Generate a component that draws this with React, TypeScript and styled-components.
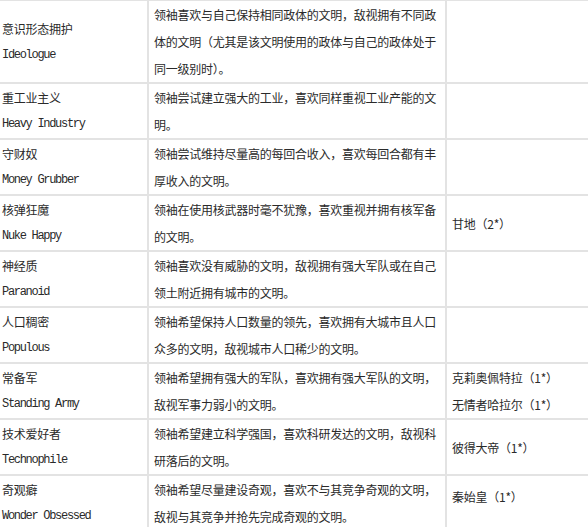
import styled, { createGlobalStyle } from "styled-components";

const GlobalStyle = createGlobalStyle`
  html, body {
    margin: 0;
    padding: 0;
    background: #ffffff;
    overflow: hidden;
  }
`;

const Page = styled.div`
  width: 588px;
  height: 527px;
  overflow: hidden;
  background: #ffffff;
`;

const Table = styled.table`
  border-collapse: collapse;
  margin-left: -5px;
  margin-top: -1px;
  table-layout: fixed;
  width: 640px;
  color: #2a2a2a;
  font-family: "Noto Sans CJK SC", "Noto Sans", sans-serif;
  font-size: 12px;
  letter-spacing: -0.25px;
`;

const Col = styled.col<{ $width: number }>`
  width: ${({ $width }) => `${$width}px`};
`;

const Cell = styled.td<{ $lift?: number }>`
  box-sizing: border-box;
  border: 2px solid #e3e3e3;
  padding: 0 4px 0 5px;
  line-height: 27px;
  vertical-align: middle;
  white-space: nowrap;
  overflow: hidden;
  padding-bottom: ${({ $lift }) => ($lift ? `${$lift}px` : "0")};
`;

const Line = styled.span`
  display: block;
`;

const EnName = styled.span`
  display: block;
  font-family: "Liberation Mono", "DejaVu Sans Mono", monospace;
  font-size: 12px;
  letter-spacing: -1.3px;
`;

type Trait = {
  name: string;
  en: string;
  desc: string[];
  leaders: string[];
  lift?: number;
};

const traits: Trait[] = [
  {
    name: "意识形态拥护",
    en: "Ideologue",
    desc: [
      "领袖喜欢与自己保持相同政体的文明，敌视拥有不同政",
      "体的文明（尤其是该文明使用的政体与自己的政体处于",
      "同一级别时）。",
    ],
    leaders: [],
  },
  {
    name: "重工业主义",
    en: "Heavy Industry",
    desc: ["领袖尝试建立强大的工业，喜欢同样重视工业产能的文", "明。"],
    leaders: [],
  },
  {
    name: "守财奴",
    en: "Money Grubber",
    desc: ["领袖尝试维持尽量高的每回合收入，喜欢每回合都有丰", "厚收入的文明。"],
    leaders: [],
  },
  {
    name: "核弹狂魔",
    en: "Nuke Happy",
    desc: ["领袖在使用核武器时毫不犹豫，喜欢重视并拥有核军备", "的文明。"],
    leaders: ["甘地（2*）"],
  },
  {
    name: "神经质",
    en: "Paranoid",
    desc: ["领袖喜欢没有威胁的文明，敌视拥有强大军队或在自己", "领土附近拥有城市的文明。"],
    leaders: [],
  },
  {
    name: "人口稠密",
    en: "Populous",
    desc: ["领袖希望保持人口数量的领先，喜欢拥有大城市且人口", "众多的文明，敌视城市人口稀少的文明。"],
    leaders: [],
  },
  {
    name: "常备军",
    en: "Standing Army",
    desc: ["领袖希望拥有强大的军队，喜欢拥有强大军队的文明，", "敌视军事力弱小的文明。"],
    leaders: ["克莉奥佩特拉（1*）", "无情者哈拉尔（1*）"],
  },
  {
    name: "技术爱好者",
    en: "Technophile",
    desc: ["领袖希望建立科学强国，喜欢科研发达的文明，敌视科", "研落后的文明。"],
    leaders: ["彼得大帝（1*）"],
  },
  {
    name: "奇观癖",
    en: "Wonder Obsessed",
    desc: ["领袖希望尽量建设奇观，喜欢不与其竞争奇观的文明，", "敌视与其竞争并抢先完成奇观的文明。"],
    leaders: ["秦始皇（1*）"],
    lift: 14,
  },
];

const App = () => {
  return (
    <Page>
      <GlobalStyle />
      <Table>
        <colgroup>
          <Col $width={152} />
          <Col $width={298} />
          <Col $width={190} />
        </colgroup>
        <tbody>
          {traits.map((t) => (
            <tr key={t.en}>
              <Cell>
                <Line>{t.name}</Line>
                <EnName>{t.en}</EnName>
              </Cell>
              <Cell>
                {t.desc.map((d) => (
                  <Line key={d}>{d}</Line>
                ))}
              </Cell>
              <Cell $lift={t.lift}>
                {t.leaders.map((l) => (
                  <Line key={l}>{l}</Line>
                ))}
              </Cell>
            </tr>
          ))}
        </tbody>
      </Table>
    </Page>
  );
};

export default App;
